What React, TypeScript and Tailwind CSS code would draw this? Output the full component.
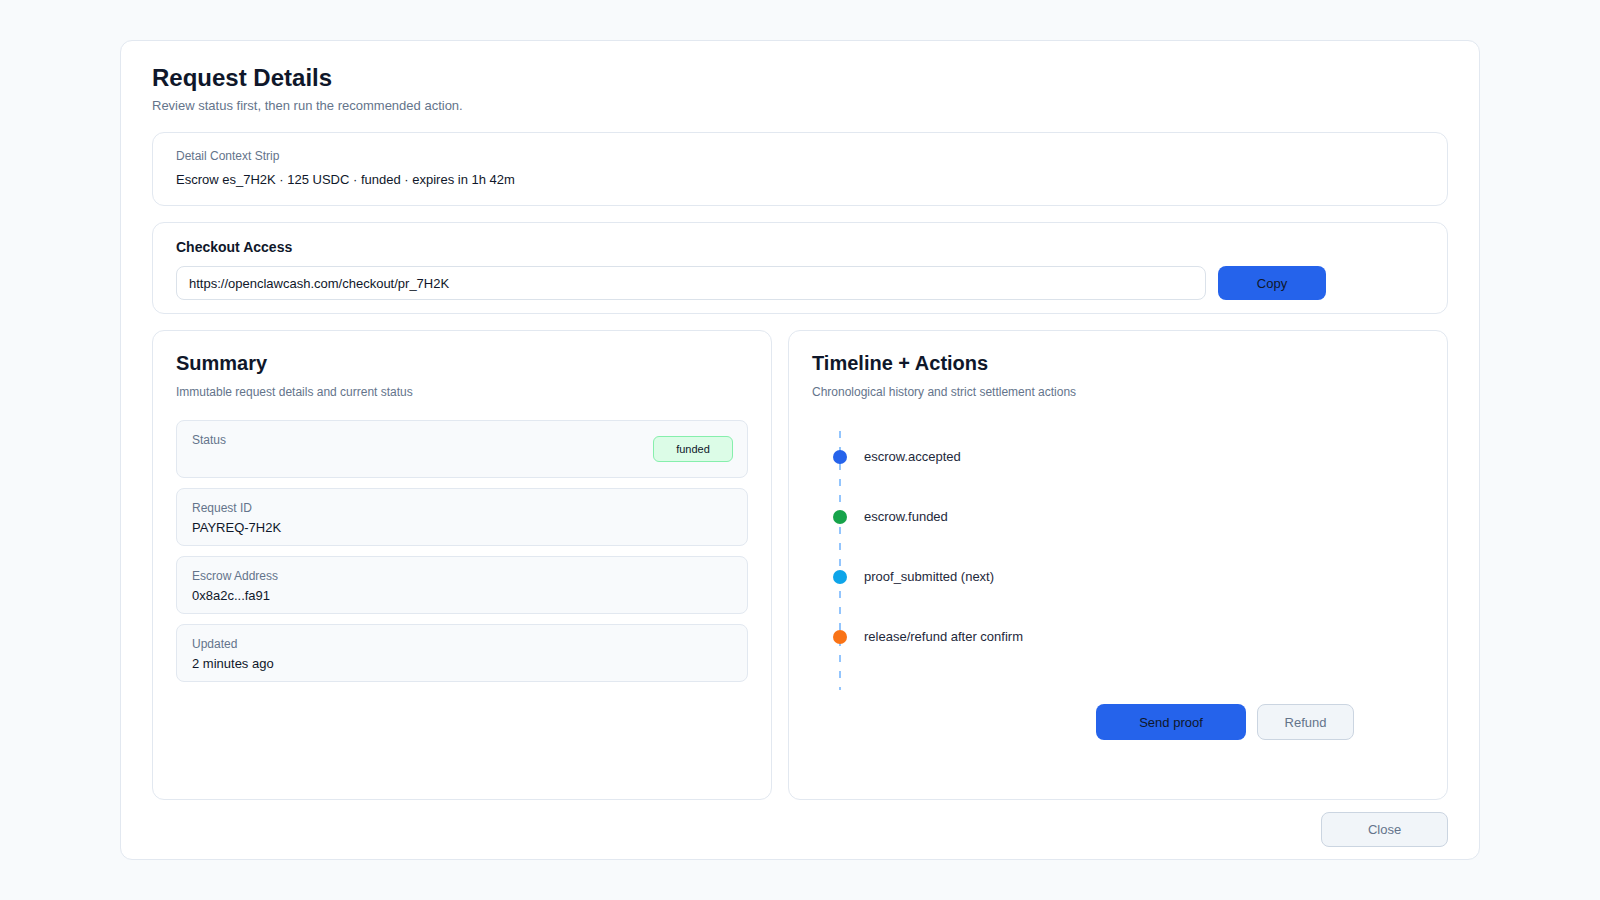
const TIMELINE = [
  { label: "escrow.accepted", dot: "bg-[#2563eb]" },
  { label: "escrow.funded", dot: "bg-[#16a34a]" },
  { label: "proof_submitted (next)", dot: "bg-[#0ea5e9]" },
  { label: "release/refund after confirm", dot: "bg-[#f97316]" },
];

const FIELDS = [
  { label: "Request ID", value: "PAYREQ-7H2K" },
  { label: "Escrow Address", value: "0x8a2c...fa91" },
  { label: "Updated", value: "2 minutes ago" },
];

export default function App() {
  return (
    <div className="min-h-screen w-full bg-[#f8fafc] flex justify-center pt-10 font-['Liberation_Sans',Arial,sans-serif]">
      {/* Outer dialog card */}
      <div className="w-[1360px] h-[820px] bg-white border border-[#e2e8f0] rounded-xl px-[31px] pt-[21px] pb-[12px] flex flex-col">
        <h1 className="text-[24px] leading-[32px] font-bold text-[#0f172a]">Request Details</h1>
        <p className="text-[13px] leading-[20px] text-[#64748b] mt-[2px]">
          Review status first, then run the recommended action.
        </p>

        {/* Context strip */}
        <div className="mt-[16px] h-[74px] border border-[#e2e8f0] rounded-xl px-[23px] pt-[15px]">
          <p className="text-[12px] leading-[16px] text-[#64748b]">Detail Context Strip</p>
          <p className="text-[13px] leading-[18px] text-[#0f172a] mt-[7px]">
            Escrow es_7H2K · 125 USDC · funded · expires in 1h 42m
          </p>
        </div>

        {/* Checkout access */}
        <div className="mt-4 h-[92px] border border-[#e2e8f0] rounded-xl px-[23px] pt-[14px]">
          <p className="text-[14px] leading-[20px] font-bold text-[#0f172a]">Checkout Access</p>
          <div className="flex items-center gap-3 mt-[9px]">
            <div className="w-[1030px] h-[34px] border border-[#dbe2ea] rounded-lg px-3 pt-[1px] flex items-center text-[13px] text-[#0f172a]">
              https://openclawcash.com/checkout/pr_7H2K
            </div>
            <button className="w-[108px] h-[34px] rounded-lg bg-[#2563eb] pt-[1px] text-[13px] text-[#0f172a]">
              Copy
            </button>
          </div>
        </div>

        {/* Two columns */}
        <div className="mt-4 grid grid-cols-[620px_1fr] gap-4 h-[470px]">
          {/* Summary */}
          <div className="border border-[#e2e8f0] rounded-xl px-[23px] pt-[18px]">
            <h2 className="text-[20px] leading-[28px] font-bold text-[#0f172a]">Summary</h2>
            <p className="text-[12px] leading-[16px] text-[#64748b] mt-[7px]">
              Immutable request details and current status
            </p>
            <div className="mt-5 flex flex-col gap-[10px]">
              <div className="h-[58px] bg-[#f8fafc] border border-[#e2e8f0] rounded-lg pl-[15px] pr-[14px] pt-[11px] flex items-start justify-between">
                <span className="text-[12px] leading-[16px] text-[#64748b]">Status</span>
                <span className="mt-[4px] w-[80px] h-[26px] rounded-md bg-[#dcfce7] border border-[#86efac] flex items-center justify-center text-[11px] text-[#0f172a]">
                  funded
                </span>
              </div>
              {FIELDS.map((f) => (
                <div
                  key={f.label}
                  className="h-[58px] bg-[#f8fafc] border border-[#e2e8f0] rounded-lg px-[15px] pt-[11px]"
                >
                  <p className="text-[12px] leading-[16px] text-[#64748b]">{f.label}</p>
                  <p className="text-[13px] leading-[18px] text-[#0f172a] mt-[3px]">{f.value}</p>
                </div>
              ))}
            </div>
          </div>

          {/* Timeline + actions */}
          <div className="border border-[#e2e8f0] rounded-xl px-[23px] pt-[18px] flex flex-col">
            <h2 className="text-[20px] leading-[28px] font-bold text-[#0f172a]">Timeline + Actions</h2>
            <p className="text-[12px] leading-[16px] text-[#64748b] mt-[7px]">
              Chronological history and strict settlement actions
            </p>
            <div className="relative ml-[21px] mt-[31px] pt-[1px] pb-[28px] flex flex-col gap-[10px]">
              <div className="absolute left-[6px] top-0 bottom-0 w-[2px] bg-[repeating-linear-gradient(to_bottom,#93c5fd_0px,#93c5fd_7px,transparent_7px,transparent_16px)]" />
              {TIMELINE.map((t) => (
                <div key={t.label} className="relative h-[50px] flex items-center gap-[17px]">
                  <span className={`w-[14px] h-[14px] rounded-full shrink-0 ${t.dot}`} />
                  <span className="text-[13px] text-[#1e293b]">{t.label}</span>
                </div>
              ))}
            </div>
            <div className="mt-[14px] mr-[70px] flex justify-end gap-[11px]">
              <button className="w-[150px] h-[36px] rounded-lg bg-[#2563eb] pt-[1px] text-[13px] text-[#0f172a]">
                Send proof
              </button>
              <button className="w-[97px] h-[36px] rounded-lg bg-[#f1f5f9] border border-[#cbd5e1] pt-[1px] text-[13px] text-[#64748b]">
                Refund
              </button>
            </div>
          </div>
        </div>

        <div className="mt-3 flex justify-end">
          <button className="w-[127px] h-[35px] rounded-lg bg-[#f1f5f9] border border-[#cbd5e1] text-[13px] text-[#64748b]">
            Close
          </button>
        </div>
      </div>
    </div>
  );
}
